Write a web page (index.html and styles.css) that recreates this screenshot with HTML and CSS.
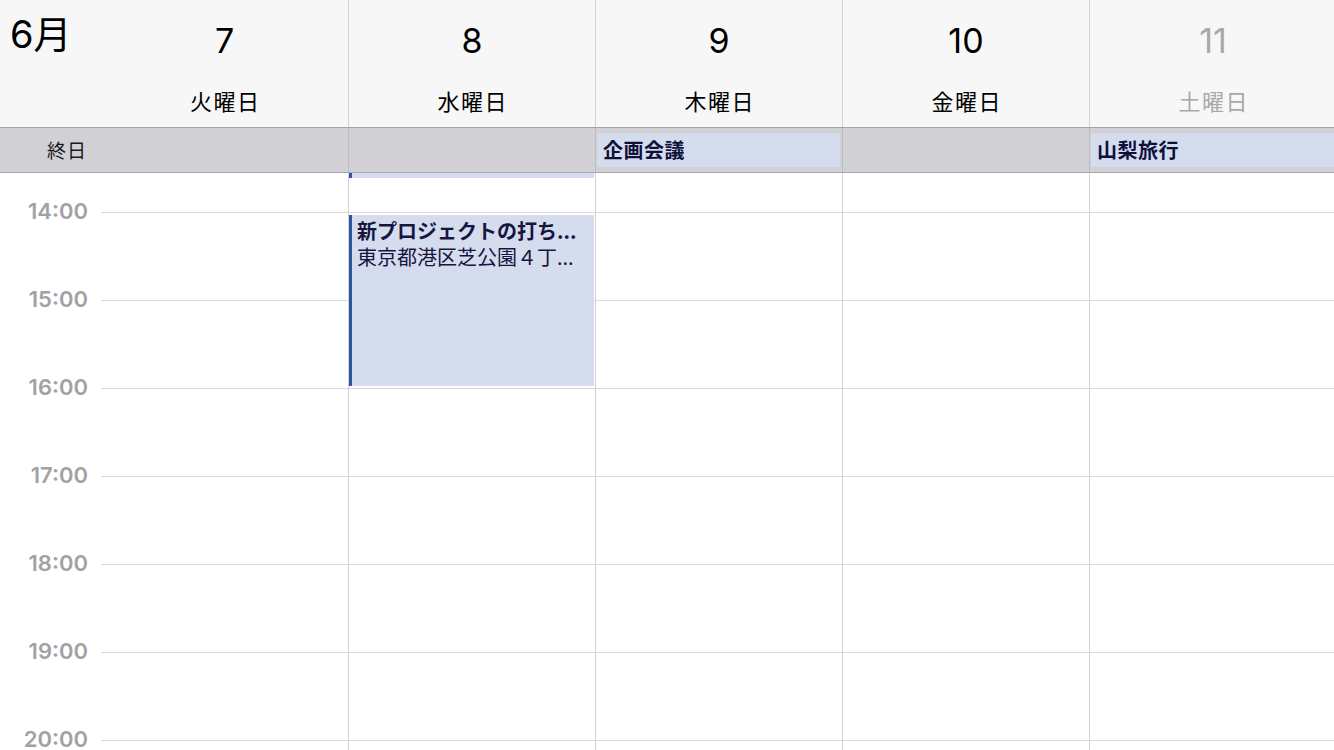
FILE: index.html
```html
<!DOCTYPE html>
<html lang="ja">
<head>
<meta charset="utf-8">
<title>カレンダー</title>
<link rel="stylesheet" href="styles.css">
</head>
<body>
<div class="cal">
  <div class="header row">
    <div class="month">6月</div>
    <div class="day"><div class="num">7</div><div class="name">火曜日</div></div>
    <div class="day sep"><div class="num">8</div><div class="name">水曜日</div></div>
    <div class="day sep"><div class="num">9</div><div class="name">木曜日</div></div>
    <div class="day sep"><div class="num">10</div><div class="name">金曜日</div></div>
    <div class="day sep weekend"><div class="num">11</div><div class="name">土曜日</div></div>
  </div>
  <div class="allday row">
    <div class="allday-label">終日</div>
    <div class="ad-cell"></div>
    <div class="ad-cell sep"></div>
    <div class="ad-cell sep"><div class="ad-event">企画会議</div></div>
    <div class="ad-cell sep"></div>
    <div class="ad-cell sep"><div class="ad-event">山梨旅行</div></div>
  </div>
  <div class="timeline row">
    <div class="gutter">
      <div class="hour">14:00</div>
      <div class="hour">15:00</div>
      <div class="hour">16:00</div>
      <div class="hour">17:00</div>
      <div class="hour">18:00</div>
      <div class="hour">19:00</div>
      <div class="hour">20:00</div>
    </div>
    <div class="col"></div>
    <div class="col sep">
      <div class="event event-tail"></div>
      <div class="event event-main">
        <div class="ev-title">新プロジェクトの打ち...</div>
        <div class="ev-loc">東京都港区芝公園４丁...</div>
      </div>
    </div>
    <div class="col sep"></div>
    <div class="col sep"></div>
    <div class="col sep"></div>
  </div>
</div>
</body>
</html>
```

FILE: styles.css
```css
html, body {
  margin: 0;
  padding: 0;
  background: #ffffff;
}

body {
  font-family: "Inter", "Noto Sans CJK JP", sans-serif;
  color: #000;
}

.cal {
  width: 1334px;
  height: 750px;
  overflow: hidden;
  display: flex;
  flex-direction: column;
}

.row {
  display: grid;
  grid-template-columns: 101px repeat(5, 247px);
  width: 1336px;
}

.sep {
  border-left: 1px solid #d2d2d2;
}

/* header */
.header {
  height: 127px;
  background: #f7f7f7;
  border-bottom: 1px solid #a4a4a6;
  flex: none;
}

.month {
  font-size: 38px;
  line-height: 44px;
  padding: 12px 0 0 10px;
  white-space: nowrap;
}

.day {
  display: flex;
  flex-direction: column;
  align-items: center;
}

.day .num {
  font-size: 34px;
  line-height: 40px;
  padding-top: 21px;
}

.day .name {
  font-family: "Noto Sans CJK JP", sans-serif;
  font-size: 22px;
  line-height: 30px;
  letter-spacing: 1.5px;
  padding-left: 1.5px;
  margin-top: 24px;
}

.weekend .num,
.weekend .name {
  color: #a9a9ab;
}

/* all-day */
.allday {
  height: 44px;
  background: #d1d0d5;
  border-bottom: 1px solid #a7a7a9;
  flex: none;
}

.allday-label {
  font-family: "Noto Sans CJK JP", sans-serif;
  font-size: 19px;
  letter-spacing: 1px;
  line-height: 44px;
  text-align: right;
  padding-right: 14px;
  color: #1a1a1a;
}

.ad-cell {
  padding: 5px 2px 0 1px;
}

.sep.ad-cell {
  border-left-color: #bdbdc1;
}

.ad-event {
  height: 34px;
  line-height: 34px;
  background: #d5dcee;
  padding-left: 6px;
  font-family: "Noto Sans CJK JP", sans-serif;
  font-weight: 700;
  font-size: 20px;
  letter-spacing: 0.5px;
  color: #0f0f3c;
  white-space: nowrap;
}

/* timeline */
.timeline {
  flex: 1;
  overflow: hidden;
}

.gutter {
  padding-top: 27px;
}

.hour {
  height: 88px;
  line-height: 22px;
  font-size: 22px;
  font-weight: 600;
  color: #a2a2a6;
  text-align: right;
  padding-right: 13px;
}

.col {
  position: relative;
  background-image: linear-gradient(to bottom, #d9d9d9 0, #d9d9d9 1px, transparent 1px);
  background-size: 100% 88px;
  background-position: 0 39px;
  background-repeat: repeat-y;
}

.event {
  position: absolute;
  left: 0;
  right: 1px;
  background: #d5dcee;
  border-left: 3px solid #2c55a6;
  box-sizing: border-box;
}

.event-tail {
  top: 0;
  height: 5px;
}

.event-main {
  top: 42px;
  height: 171px;
  padding: 3px 0 0 5px;
  font-family: "Noto Sans CJK JP", sans-serif;
  font-size: 20px;
  line-height: 26px;
  color: #15153f;
  white-space: nowrap;
  overflow: hidden;
}

.ev-title {
  font-weight: 700;
  height: 26px;
}

.ev-loc {
  font-weight: 400;
  height: 26px;
}
```
